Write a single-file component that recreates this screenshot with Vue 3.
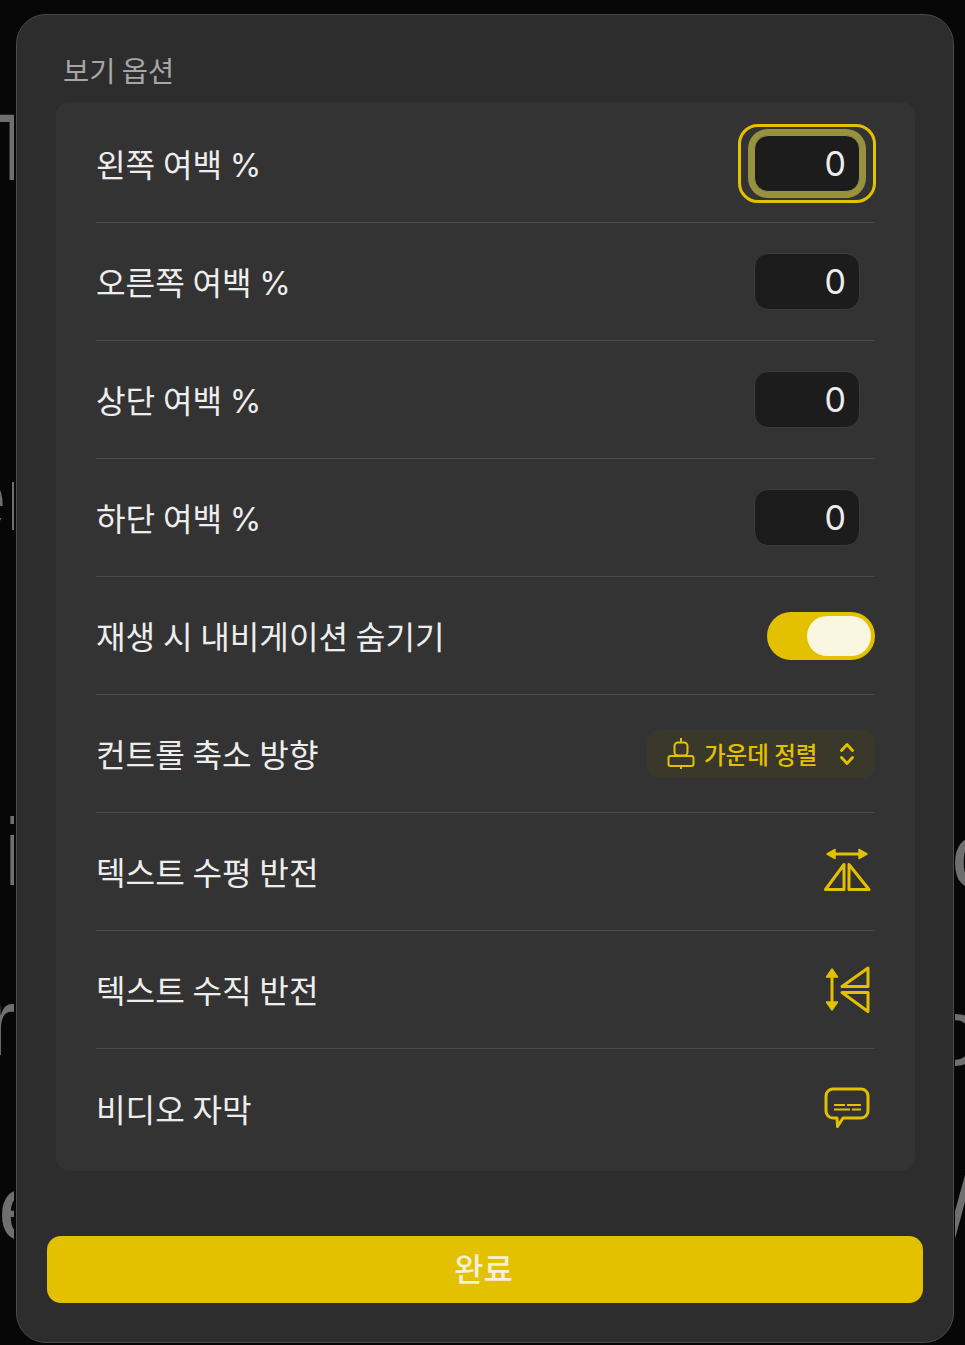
<template>
  <div class="page">
    <!-- 모달 뒤에 살짝 보이는 글자 -->
    <div class="behind left">
      <span class="ghost g-t">T</span>
      <span class="ghost g-e1">e</span>
      <span class="ghost g-i">i</span>
      <span class="ghost g-r">r</span>
      <span class="ghost g-e2">e</span>
    </div>
    <div class="behind right">
      <span class="ghost g-c">c</span>
      <span class="ghost g-o">o</span>
      <span class="ghost g-s">/</span>
    </div>

    <div class="modal">
      <div class="title">보기 옵션</div>

      <div class="list">
        <div v-for="(item, i) in margins" :key="item.label" class="row">
          <span class="label">{{ item.label }}</span>
          <div class="field" :class="{ focused: i === 0 }">
            <input v-model="item.value" class="num" type="text" />
          </div>
        </div>

        <div class="row">
          <span class="label">재생 시 내비게이션 숨기기</span>
          <button class="toggle" :class="{ on: hideNav }" @click="hideNav = !hideNav">
            <span class="knob"></span>
          </button>
        </div>

        <div class="row">
          <span class="label">컨트롤 축소 방향</span>
          <button class="select">
            <svg width="28" height="32" viewBox="0 0 28 32" fill="none" stroke="#e3c000" stroke-width="2">
              <path d="M14 0v4M14 28v3" />
              <rect x="7.500" y="4.500" width="13" height="13" rx="3.500" />
              <rect x="1.500" y="18" width="25" height="10" rx="2" />
            </svg>
            <span class="select-text">가운데 정렬</span>
            <svg width="18" height="26" viewBox="0 0 18 26" fill="none" stroke="#e3c000" stroke-width="2.800" stroke-linecap="round" stroke-linejoin="round">
              <path d="M3.500 9.500 9 3.500l5.500 6M3.500 16.500 9 22.500l5.500-6" />
            </svg>
          </button>
        </div>

        <div class="row">
          <span class="label">텍스트 수평 반전</span>
          <svg class="icon" width="50" height="48" viewBox="22 13 50 48" fill="none" stroke="#e3c000" stroke-width="3" stroke-linejoin="round">
            <path d="M33 19h28" />
            <path d="M27 19l8-4.500v9zM67 19l-8-4.500v9z" fill="#e3c000" stroke-width="1.500" />
            <path d="M44 29.500v25H25.500zM49 29.500v25h20z" />
          </svg>
        </div>

        <div class="row">
          <span class="label">텍스트 수직 반전</span>
          <svg class="icon" width="50" height="48" viewBox="22 11 50 48" fill="none" stroke="#e3c000" stroke-width="3" stroke-linejoin="round">
            <path d="M32 20v29" />
            <path d="M32 14l-5.500 8h11zM32 55l-5.500-8h11z" fill="#e3c000" stroke-width="1.500" />
            <path d="M68 13v18.500H42zM68 37.500v19L42 37.500z" />
          </svg>
        </div>

        <div class="row last">
          <span class="label">비디오 자막</span>
          <svg class="icon" width="50" height="48" viewBox="22 9 50 48" fill="none" stroke="#e3c000" stroke-width="3" stroke-linejoin="round">
            <path d="M33 14h28a7 7 0 0 1 7 7v15a7 7 0 0 1-7 7H43l-5.500 8.500L37 43h-4a7 7 0 0 1-7-7V21a7 7 0 0 1 7-7z" />
            <path d="M34 30h11M47 30h14M34 34.500h16M52 34.500h9" stroke-width="1.800" />
          </svg>
        </div>
      </div>

      <button class="done">완료</button>
    </div>
  </div>
</template>

<script setup>
import { ref } from 'vue'

const margins = ref([
  { label: '왼쪽 여백 %', value: '0' },
  { label: '오른쪽 여백 %', value: '0' },
  { label: '상단 여백 %', value: '0' },
  { label: '하단 여백 %', value: '0' }
])

const hideNav = ref(true)
</script>

<style>
html,
body {
  margin: 0;
  background: #070707;
}
</style>

<style scoped>
.page {
  position: relative;
  width: 965px;
  height: 1345px;
  overflow: hidden;
  padding: 14px 11px 2px 16px;
  box-sizing: border-box;
  font-family: "Noto Sans CJK KR", "Noto Sans", sans-serif;
}

.behind {
  position: absolute;
  top: 0;
  bottom: 0;
  overflow: hidden;
}

.behind.left {
  left: 0;
  width: 14px;
}

.behind.left::after {
  content: "";
  position: absolute;
  left: 12px;
  top: 482px;
  width: 2px;
  height: 48px;
  background: #6f6f6f;
}

.behind.right {
  left: 955px;
  width: 10px;
}

.ghost {
  position: absolute;
  font-family: "Liberation Sans", sans-serif;
  font-size: 95px;
  line-height: 1;
  color: #6f6f6f;
}

.g-t { left: -15px; top: 100px; }
.g-e1 { left: -46px; top: 449px; }
.g-i { left: 4px; top: 805px; }
.g-r { left: -14px; top: 975px; }
.g-e2 { left: -2px; top: 1160px; }
.g-c { left: -4px; top: 808px; }
.g-o { left: -26px; top: 985px; }
.g-s { left: -8px; top: 1160px; }

.modal {
  height: 1329px;
  box-sizing: border-box;
  padding: 32px 30px 0 30px;
  background: #2d2d2d;
  border: 1.500px solid #4b4b4b;
  border-radius: 30px;
  display: flex;
  flex-direction: column;
  position: relative;
}

.title {
  height: 55px;
  padding-left: 16px;
  font-size: 28.500px;
  line-height: 46px;
  color: #a6a6a6;
  box-sizing: border-box;
}

.list {
  margin: 0 8px 0 9px;
  padding: 3px 40px 4px;
  background: #333333;
  border-radius: 14px;
}

.row {
  height: 118px;
  box-sizing: border-box;
  border-bottom: 1.500px solid #4a4a4a;
  display: flex;
  align-items: center;
  justify-content: space-between;
}

.row.last {
  border-bottom: none;
}

.label {
  padding-bottom: 1px;
  font-family: "Inter", "Noto Sans CJK KR", sans-serif;
  font-size: 32.200px;
  word-spacing: -1.400px;
  color: #ededed;
}

.field {
  position: relative;
  margin-right: 15px;
}

.num {
  display: block;
  width: 106px;
  height: 57px;
  box-sizing: border-box;
  padding: 0 13px 0 0;
  border: 1.500px solid #3c3c3c;
  border-radius: 14px;
  outline: none;
  background: #1c1c1c;
  color: #ececec;
  font-family: "Inter", "Noto Sans", sans-serif;
  font-size: 34px;
  text-align: right;
}

.field.focused .num {
  border-color: #96923f;
  box-shadow: 0 0 0 6px #96923f;
}

.field.focused::after {
  content: "";
  position: absolute;
  inset: -11px -16px;
  border: 3.500px solid #e3c000;
  border-radius: 20px;
  pointer-events: none;
}

.toggle {
  width: 108px;
  height: 48px;
  padding: 4px;
  border: none;
  border-radius: 24px;
  background: #e3c000;
  display: flex;
  justify-content: flex-start;
}

.toggle.on {
  justify-content: flex-end;
}

.knob {
  width: 64px;
  height: 40px;
  border-radius: 20px;
  background: #fbf6df;
}

.select {
  width: 228px;
  height: 48px;
  padding: 0 19px 0 20px;
  border: none;
  border-radius: 12px;
  background: #39382a;
  display: flex;
  align-items: center;
  gap: 9px;
  font-family: inherit;
}

.select svg:last-child {
  margin-left: auto;
}

.select-text {
  font-size: 23.500px;
  font-weight: 500;
  color: #e3c000;
  white-space: nowrap;
}

.icon {
  margin-right: 3px;
}

.done {
  margin-top: 65px;
  height: 67px;
  padding: 0 3px 5px 0;
  border: none;
  border-radius: 14px;
  background: #e3c000;
  color: #f5f0d8;
  font-family: inherit;
  font-size: 32px;
  font-weight: 500;
}
</style>
